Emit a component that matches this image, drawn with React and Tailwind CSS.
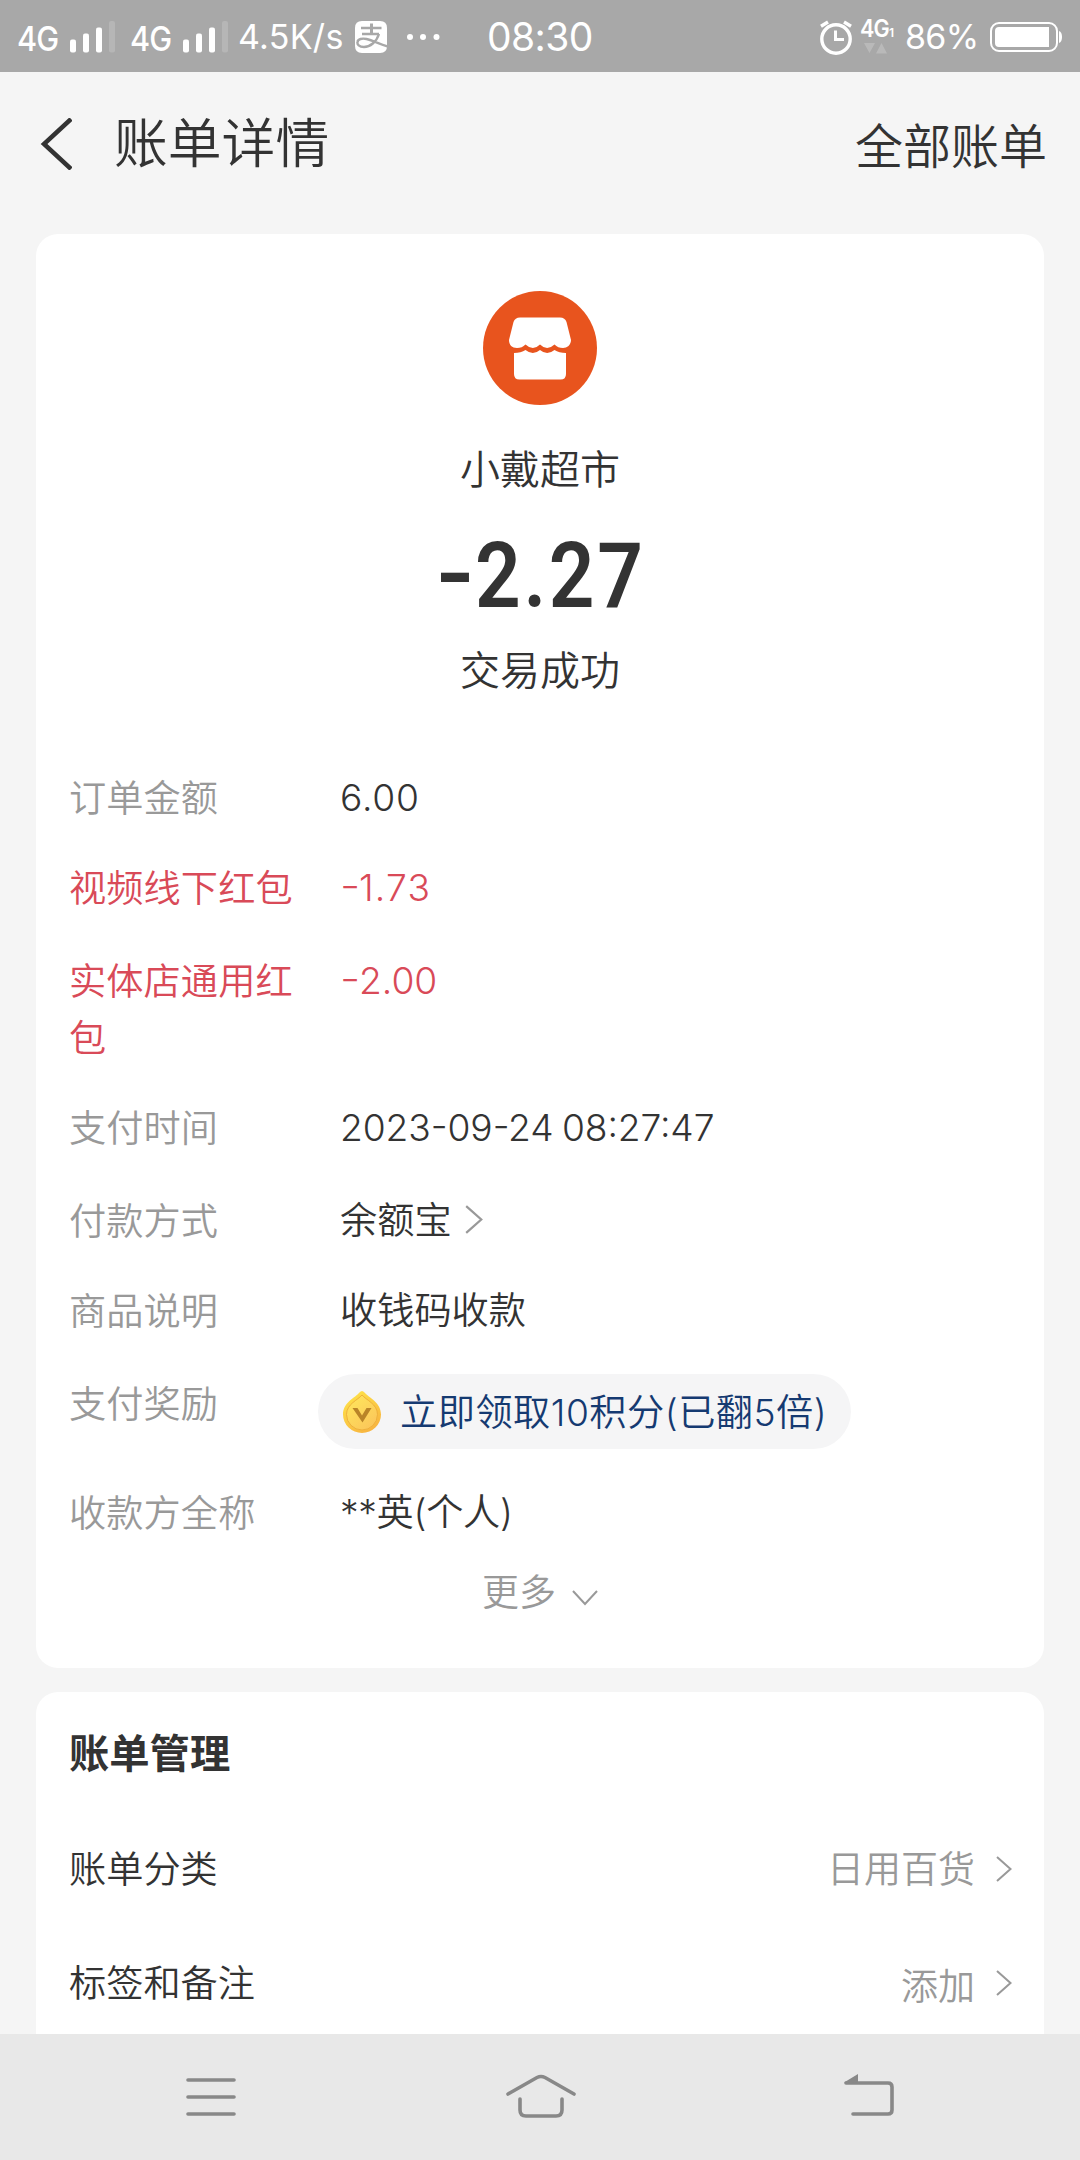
import React from "react";

function SignalBars() {
  return (
    <svg className="block h-[34px] w-[46px]" viewBox="0 0 46 34" fill="#fff">
      <rect x="0" y="19.500" width="6" height="13" rx="2" />
      <rect x="13" y="13.500" width="6" height="19" rx="2" />
      <rect x="26" y="7.500" width="6" height="25" rx="2" />
      <rect x="39" y="1" width="6" height="31.500" rx="2" opacity="0.16" />
    </svg>
  );
}

function AlipayIcon() {
  return (
    <svg className="block h-8 w-8" viewBox="0 0 32 32">
      <path d="M7 0H25Q32 0 32 7V25.500Q32 32 25 32H7Q0 32 0 25V7Q0 0 7 0Z" fill="#fff" />
      <g fill="none" stroke="#a8a8a8" strokeWidth="2.400">
        <path d="M6 7H26.500M7 13H24" />
        <path d="M16.500 2.500V13" strokeWidth="3" />
        <path d="M24 13C21.500 21 15 26 9 26C4 26 2 23.500 2.500 21C3 18 7 17 11.500 18C17 19.200 25 23 33 25.500" />
      </g>
    </svg>
  );
}

function AlarmIcon() {
  return (
    <svg className="block h-9 w-8" viewBox="0 0 32 36" fill="none" stroke="#fff">
      <circle cx="16" cy="20" r="14.2" strokeWidth="3.4" />
      <path d="M15.5 11.5v9H24" strokeWidth="3" />
      <path d="M1 7.3 8 3M31 7.3 24 3" strokeWidth="3.4" />
    </svg>
  );
}

function BatteryIcon() {
  return (
    <svg className="block h-8 w-[73px]" viewBox="0 0 73 32">
      <rect x="1" y="2" width="66" height="28" rx="8" fill="none" stroke="#fff" strokeWidth="2" />
      <path d="M9 6H59V26H9Q5 26 5 22V10Q5 6 9 6Z" fill="#fff" />
      <path d="M69 10Q72 11 72 16T69 22Z" fill="#fff" />
    </svg>
  );
}

function StatusBar() {
  return (
    <div className="flex h-[72px] shrink-0 items-center bg-[#a8a8a8] font-normal text-white">
      <div className="flex w-full items-center pt-px">
        <span className="ml-[17px] w-[53px] origin-left scale-x-90 text-[34px] leading-[40px] font-medium tracking-[-1px] pt-[5px]">4G</span>
        <SignalBars />
        <span className="ml-[14px] w-[53px] origin-left scale-x-90 text-[34px] leading-[40px] font-medium tracking-[-1px] pt-[5px]">4G</span>
        <SignalBars />
        <span className="ml-[9px] w-[117px] text-[34px] leading-[40px] tracking-[0.3px] whitespace-nowrap">4.5K/s</span>
        <AlipayIcon />
        <svg className="ml-[19px] block h-2 w-9" viewBox="0 0 36 8" fill="#fff">
          <circle cx="4" cy="4" r="3" />
          <circle cx="17" cy="4" r="3" />
          <circle cx="30.500" cy="4" r="3" />
        </svg>
        <span className="ml-[45px] w-[109px] text-[39px] leading-[44px] tracking-[-0.6px] whitespace-nowrap pt-px">08:30</span>
        <div className="ml-auto flex items-center">
          <AlarmIcon />
          <div className="ml-2 flex w-[42px] flex-col">
            <div className="-mt-[3px] flex h-[23px] items-end">
              <span className="w-[29px] origin-left scale-x-90 text-[24px] leading-[22px] font-semibold tracking-[-1px]">4G</span>
              <span className="text-[12px] leading-[14px] font-semibold">1</span>
            </div>
            <svg className="mt-[3px] ml-1 block h-[11px] w-6" viewBox="0 0 24 11" fill="#fff" opacity="0.2">
              <path d="M0 0H11L5.5 10ZM12 10.500H23L17.500 0Z" />
            </svg>
          </div>
          <span className="ml-[3px] w-[85px] text-[34px] leading-[40px] tracking-[-0.7px] whitespace-nowrap pt-px">86%</span>
          <BatteryIcon />
          <span className="w-[17px]" />
        </div>
      </div>
    </div>
  );
}

function Header() {
  return (
    <header className="flex h-[162px] shrink-0 items-start text-[#333]">
      <svg className="mt-[46px] ml-10 block h-[52px] w-8" viewBox="0 0 32 52" fill="none" stroke="#333" strokeWidth="4.500">
        <path d="M31 1 4 26 31 51" />
      </svg>
      <h1 className="mt-[37px] ml-[42px] text-[53.800px] leading-[70px]">账单详情</h1>
      <span className="mt-[40px] mr-[33px] ml-auto text-[48px] leading-[70px]">全部账单</span>
    </header>
  );
}

function StoreIcon() {
  return (
    <svg className="mx-auto block h-[114px] w-[114px]" viewBox="0 0 114 114">
      <circle cx="57" cy="57" r="57" fill="#e8541e" />
      <path
        fill="#fff"
        d="M37 26.500H77Q82 26.500 83.500 31L88 49C88 54 84 57 80 57Q75 57 71.500 53.500Q64 60.500 57 53.500Q50 60.500 42.500 53.500Q39 57 34 57C29 57 26 54 26 49L30.500 31Q32 26.500 37 26.500Z"
      />
      <path
        fill="#fff"
        d="M31 62Q38 62 42.500 59Q50 65 57 59Q64 65 71.500 59Q76 62 83 62V83Q83 88.500 77.500 88.500H36.500Q31 88.500 31 83Z"
      />
    </svg>
  );
}

function CoinIcon() {
  return (
    <svg className="block h-[44px] w-[40px]" viewBox="0 0 40 44">
      <defs>
        <linearGradient id="coin" x1="0" y1="0" x2="0.6" y2="1">
          <stop offset="0" stopColor="#ffe84a" />
          <stop offset="1" stopColor="#f8b640" />
        </linearGradient>
        <linearGradient id="coinFace" x1="0" y1="0" x2="0.8" y2="1">
          <stop offset="0" stopColor="#ffe95c" />
          <stop offset="1" stopColor="#fbc55a" />
        </linearGradient>
      </defs>
      <path d="M20 1Q21.500 1 24 4C28 8 39 13 39 24.500A19 18.500 0 0 1 1 24.500C1 13 12 8 16 4Q18.500 1 20 1Z" fill="url(#coin)" />
      <path d="M20 5C24 10 35.500 14 35.500 24.500A15.500 15.500 0 0 1 4.500 24.500C4.500 14 16 10 20 5Z" fill="url(#coinFace)" stroke="#eeb03c" strokeWidth="1" />
      <path d="M10.500 18H15.500L20 25.500 24.500 18H29.500L20.500 32.500Z" fill="#b98428" />
    </svg>
  );
}

function ChevronRight({ className }) {
  return (
    <svg className={className} viewBox="0 0 16 26" fill="none" stroke="#999" strokeWidth="2">
      <path d="M1 1 14.500 13 1 25" />
    </svg>
  );
}

function Row({ label, className = "", labelClass = "text-[#999]", children }) {
  return (
    <div className={"flex items-start text-[37.200px] leading-[57px] text-[#333] " + className}>
      <div className={"w-[226px] shrink-0 pt-px tracking-[0.1px] " + labelClass}>{label}</div>
      <div className="ml-[45px] flex items-center whitespace-nowrap">{children}</div>
    </div>
  );
}

function Discount({ amount, className }) {
  return (
    <span className="flex text-[#d94a58]">
      <span className="w-[19px] origin-left scale-x-[1.2] [font-feature-settings:'case']">-</span>
      <span className={className}>{amount}</span>
    </span>
  );
}

function BillCard() {
  return (
    <section className="mx-9 h-[1434px] shrink-0 rounded-[22px] bg-white pt-[57px] pl-[33px] text-[#333]">
      <div className="-ml-[33px] text-center">
        <StoreIcon />
        <div className="mt-[36px] text-[40px] leading-[58px]">小戴超市</div>
        <div className="mt-[25px] flex justify-center font-[Roboto] text-[91px] leading-[104px] font-semibold">
          <span className="-mt-[2px] mb-[2px] w-[39px] origin-left scale-x-115 text-left">-</span>
          <span className="w-[169px] origin-left scale-x-[0.88] text-left tracking-[3px]">2.27</span>
        </div>
        <div className="mt-[14px] text-[40px] leading-[58px]">交易成功</div>
      </div>
      <Row className="mt-[69px]" label="订单金额">
        <span className="tracking-[0.8px]">6.00</span>
      </Row>
      <Row className="mt-[32px]" labelClass="text-[#d94a58]" label="视频线下红包">
        <Discount amount="1.73" className="tracking-[1.2px]" />
      </Row>
      <Row className="mt-[35px]" labelClass="text-[#d94a58]" label="实体店通用红包">
        <Discount amount="2.00" className="" />
      </Row>
      <Row className="mt-[32px]" label="支付时间">
        <span className="tracking-[-0.1px] [font-feature-settings:'case'] [word-spacing:-2px]">2023-09-24 08:27:47</span>
      </Row>
      <Row className="mt-[35px]" label="付款方式">
        余额宝
        <ChevronRight className="-mt-[2px] ml-[13px] block h-[29px] w-[18px]" />
      </Row>
      <Row className="mt-[32px]" label="商品说明">收钱码收款</Row>
      <Row className="mt-[35px] h-[74px]" label="支付奖励">
        <div className="-mt-px -ml-[22px] flex h-[75px] w-[533px] items-center rounded-full bg-[#f5f5f6] pl-[24px] text-[#153a71]">
          <CoinIcon />
          <span className="ml-[18px] pt-px tracking-[0.5px]">立即领取10积分(已翻5倍)</span>
        </div>
      </Row>
      <Row className="mt-[35px]" label="收款方全称">
        <span className="tracking-[-0.3px]">**英(个人)</span>
      </Row>
      <div className="mt-[22px] -ml-[33px] flex items-center justify-center text-[37px] leading-[57px] text-[#999]">
        更多
        <svg className="mt-[10px] ml-4 block h-4 w-[26px]" viewBox="0 0 26 16" fill="none" stroke="#999" strokeWidth="2">
          <path d="M1 1 13 14 25 1" />
        </svg>
      </div>
    </section>
  );
}

function ManageRow({ label, value, className, valueClass = "" }) {
  return (
    <div className={"flex items-center text-[37.200px] leading-[57px] " + className}>
      <span>{label}</span>
      <span className={"ml-auto text-[37px] text-[#999] " + valueClass}>{value}</span>
      <ChevronRight className="-mt-[2px] ml-[21px] block h-[26px] w-[16px]" />
    </div>
  );
}

function ManageCard() {
  return (
    <section className="mx-9 mt-6 h-[342px] shrink-0 overflow-hidden rounded-t-[22px] bg-white pt-[33px] pr-[32px] pl-[33px] text-[#333]">
      <h2 className="text-[40.300px] leading-[58px] font-bold">账单管理</h2>
      <ManageRow className="mt-[58px]" label="账单分类" value="日用百货" />
      <ManageRow className="mt-[57px]" label="标签和备注" value="添加" valueClass="pt-[3px] -mb-[3px]" />
    </section>
  );
}

function NavBar() {
  return (
    <nav className="flex h-[126px] shrink-0 items-start bg-[#e8e8e8] pt-[40px]">
      <svg className="ml-[186px] block h-[44px] w-[50px]" viewBox="0 0 50 44" stroke="#888" strokeWidth="3.600" strokeLinecap="round">
        <path d="M2 6H48M2 23H48M2 40H48" />
      </svg>
      <svg className="ml-[270px] block h-[44px] w-[70px]" viewBox="0 0 70 44" fill="none" stroke="#888" strokeWidth="3.600" strokeLinecap="round">
        <path d="M2 20 31 3.500Q35 1.500 39 3.500L68 20M14 25V36Q14 42 20 42H50Q56 42 56 36V25" />
      </svg>
      <svg className="ml-[267px] block h-[44px] w-[52px]" viewBox="0 0 52 44" fill="none" stroke="#888" strokeWidth="3.600" strokeLinecap="round">
        <path d="M3 9H45Q49 9 49 13V36Q49 40 45 40H10" />
        <path d="M1 8.500 15 0V9Z" fill="#888" stroke="none" />
      </svg>
    </nav>
  );
}

export default function App() {
  return (
    <div className="flex h-[2160px] w-[1080px] flex-col overflow-hidden bg-[#f5f5f5] font-['Inter','Noto_Sans_CJK_SC',sans-serif] font-[350]">
      <StatusBar />
      <Header />
      <BillCard />
      <ManageCard />
      <NavBar />
    </div>
  );
}
